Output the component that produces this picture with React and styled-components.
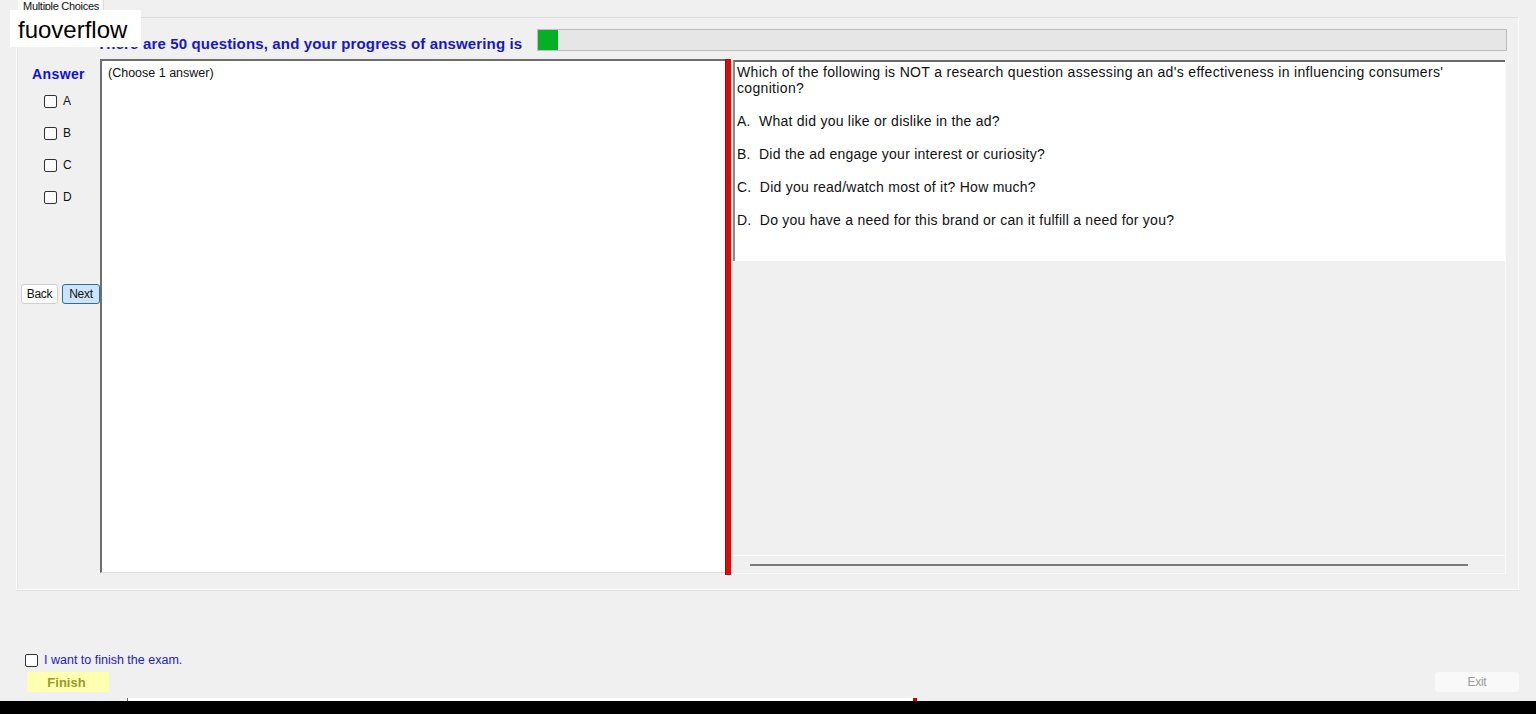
import React, { useState } from 'react'
import styled, { createGlobalStyle } from 'styled-components'

const Global = createGlobalStyle`
  html, body {
    margin: 0;
    padding: 0;
    background: #f0f0f0;
    font-family: "Liberation Sans", Arial, sans-serif;
  }
`

const Page = styled.div`
  position: relative;
  width: 1536px;
  height: 714px;
  overflow: hidden;
  display: flex;
  flex-direction: column;
`
const Stamp = styled.div`
  position: absolute;
  left: 10px;
  top: 10px;
  width: 131px;
  height: 37px;
  background: #fff;
  color: #000;
  font-size: 24px;
  line-height: 40px;
  padding-left: 8px;
  box-sizing: border-box;
  z-index: 5;
`
const TabStrip = styled.div`
  height: 17px;
  display: flex;
  padding-left: 18px;
`
const Tab = styled.div`
  width: 84px;
  height: 17px;
  background: #f9f9f9;
  border-right: 1px solid #dadada;
  border-left: 1px solid #fff;
  font-size: 11px;
  line-height: 12px;
  color: #111;
  text-align: center;
  letter-spacing: -0.3px;
  overflow: hidden;
`
const TabPage = styled.div`
  height: 571px;
  margin: 0 17px 0 16px;
  border: 1px solid #fafafa;
  border-top-color: #dcdcdc;
  box-shadow: 0 1px 0 #e2e2e2, inset 1px 0 0 #e6e6e6;
  display: flex;
  flex-direction: column;
`
const Header = styled.div`
  display: flex;
  align-items: flex-end;
  padding: 11px 11px 0 80px;
`
const Heading = styled.div`
  font-size: 15px;
  font-weight: bold;
  letter-spacing: 0.15px;
  color: #1717c4;
  line-height: 16px;
  margin-bottom: -1px;
  white-space: nowrap;
`
const Progress = styled.div`
  flex: 1;
  height: 20px;
  margin-left: 15px;
  background: #e6e6e6;
  border: 1px solid #bcbcbc;
  display: flex;
`
const Fill = styled.div`
  background: #06b025;
  height: 100%;
`
const Body = styled.div`
  display: flex;
  margin-top: 8px;
  height: 515px;
`
const Sidebar = styled.div`
  width: 83px;
  display: flex;
  flex-direction: column;
`
const AnswerLabel = styled.div`
  font-size: 14px;
  font-weight: bold;
  letter-spacing: 0.4px;
  color: #0f0fd8;
  text-align: center;
  line-height: 16px;
  margin-top: 7px;
`
const Options = styled.div`
  display: flex;
  flex-direction: column;
  gap: 12px;
  margin-top: 9px;
  padding-left: 27px;
`
const Option = styled.label`
  display: flex;
  align-items: center;
  gap: 6px;
  height: 20px;
  font-size: 12px;
  color: #111;
`
const Box = styled.span`
  width: 11px;
  height: 11px;
  border: 1px solid #333;
  border-radius: 2px;
  background: ${p => (p.$on ? '#0078d7' : '#fff')};
`
const Buttons = styled.div`
  display: flex;
  gap: 4px;
  margin-top: 77px;
  padding-left: 4px;
`
const Button = styled.button`
  height: 20px;
  padding: 0;
  width: ${p => p.$w}px;
  font-family: inherit;
  font-size: 12px;
  letter-spacing: -0.3px;
  color: #111;
  border-radius: 3px;
  border: 1px solid ${p => (p.$active ? '#2c6e9e' : '#d0d0d0')};
  background: ${p => (p.$active ? '#cce4f7' : '#fdfdfd')};
`
const AnswerBox = styled.div`
  width: 626px;
  height: 514px;
  background: #fff;
  border-top: 2px solid #6e6e6e;
  border-left: 2px solid #6e6e6e;
  border-right: 1px solid #e6e6e6;
  border-bottom: 1px solid #e0e0e0;
  box-sizing: border-box;
  padding: 5px 6px;
  font-size: 12.5px;
  color: #111;
`
const Splitter = styled.div`
  width: 6px;
  height: 516px;
  margin-left: -1px;
  background: #dd0a0a;
  border-left: 1px solid #b30000;
  box-sizing: border-box;
`
const RightPanel = styled.div`
  width: 775px;
  height: 515px;
  display: flex;
  flex-direction: column;
  border-right: 1px solid #fafafa;
  border-bottom: 1px solid #fafafa;
  box-sizing: border-box;
`
const QuestionBox = styled.div`
  height: 201px;
  margin: 1px 0 0 2px;
  background: #fff;
  border-top: 2px solid #6b6b6b;
  border-left: 2px solid #8a8a8a;
  box-sizing: border-box;
  padding: 2px 2px;
  font-size: 14px;
  letter-spacing: 0.33px;
  color: #111;
`
const Stem = styled.p`
  margin: 0 0 17px;
  line-height: 16px;
`
const Choice = styled.p`
  margin: 0 0 17px;
  line-height: 16px;
  white-space: pre;
  letter-spacing: 0.25px;
`
const Blank = styled.div`
  flex: 1;
  border-bottom: 1px solid #fbfbfb;
`
const ScrollTrack = styled.div`
  height: 17px;
  display: flex;
  align-items: center;
  padding: 0 37px 0 19px;
`
const ScrollThumb = styled.div`
  flex: 1;
  height: 2px;
  background: #7c7c7c;
`
const Footer = styled.div`
  flex: 1;
  display: flex;
  flex-direction: column;
  justify-content: flex-end;
`
const FinishCheck = styled.label`
  display: flex;
  align-items: center;
  gap: 6px;
  margin-left: 25px;
  font-size: 12.5px;
  color: #1d1dbb;
`
const ActionRow = styled.div`
  display: flex;
  justify-content: space-between;
  align-items: center;
  margin: 5px 17px 0 27px;
`
const Finish = styled.div`
  width: 82px;
  height: 20px;
  background: #ffffb0;
  color: #9a9a2c;
  font-weight: bold;
  font-size: 13px;
  line-height: 21px;
  text-align: center;
  padding-right: 3px;
  box-sizing: border-box;
`
const Exit = styled.div`
  width: 84px;
  height: 20px;
  background: #f9f9f9;
  border-radius: 4px;
  color: #9c9c9c;
  font-size: 12px;
  line-height: 20px;
  text-align: center;
  letter-spacing: -0.3px;
`
const Strip = styled.div`
  height: 3px;
  margin-top: 6px;
  display: flex;
`
const StripBar = styled.div`
  margin-left: 127px;
  width: 785px;
  background: #fff;
  border-left: 1px solid #666;
  border-right: 4px solid #c00;
`
const Black = styled.div`
  height: 13px;
  background: #000;
`

const letters = ['A', 'B', 'C', 'D']
const question = {
  stem: [
    "Which of the following is NOT a research question assessing an ad's effectiveness in influencing consumers'",
    'cognition?',
  ],
  choices: [
    'What did you like or dislike in the ad?',
    'Did the ad engage your interest or curiosity?',
    'Did you read/watch most of it? How much?',
    'Do you have a need for this brand or can it fulfill a need for you?',
  ],
}

export default function App() {
  const [picked, setPicked] = useState(null)
  const [done, setDone] = useState(false)
  const answered = 1
  const total = 50

  return (
    <Page>
      <Global />
      <Stamp>fuoverflow</Stamp>
      <TabStrip>
        <Tab>Multiple Choices</Tab>
      </TabStrip>
      <TabPage>
        <Header>
          <Heading>There are {total} questions, and your progress of answering is</Heading>
          <Progress>
            <Fill style={{ width: `${(answered / total) * 100}%` }} />
          </Progress>
        </Header>
        <Body>
          <Sidebar>
            <AnswerLabel>Answer</AnswerLabel>
            <Options>
              {letters.map(l => (
                <Option key={l} onClick={() => setPicked(l)}>
                  <Box $on={picked === l} />
                  {l}
                </Option>
              ))}
            </Options>
            <Buttons>
              <Button $w={37}>Back</Button>
              <Button $w={38} $active>Next</Button>
            </Buttons>
          </Sidebar>
          <AnswerBox>(Choose 1 answer)</AnswerBox>
          <Splitter />
          <RightPanel>
            <QuestionBox>
              <Stem>
                {question.stem[0]}
                <br />
                {question.stem[1]}
              </Stem>
              {question.choices.map((c, i) => (
                <Choice key={i}>
                  {`${letters[i]}.  ${c}`}
                </Choice>
              ))}
            </QuestionBox>
            <Blank />
            <ScrollTrack>
              <ScrollThumb />
            </ScrollTrack>
          </RightPanel>
        </Body>
      </TabPage>
      <Footer>
        <FinishCheck onClick={() => setDone(!done)}>
          <Box $on={done} />
          I want to finish the exam.
        </FinishCheck>
        <ActionRow>
          <Finish>Finish</Finish>
          <Exit>Exit</Exit>
        </ActionRow>
        <Strip>
          <StripBar />
        </Strip>
        <Black />
      </Footer>
    </Page>
  )
}
